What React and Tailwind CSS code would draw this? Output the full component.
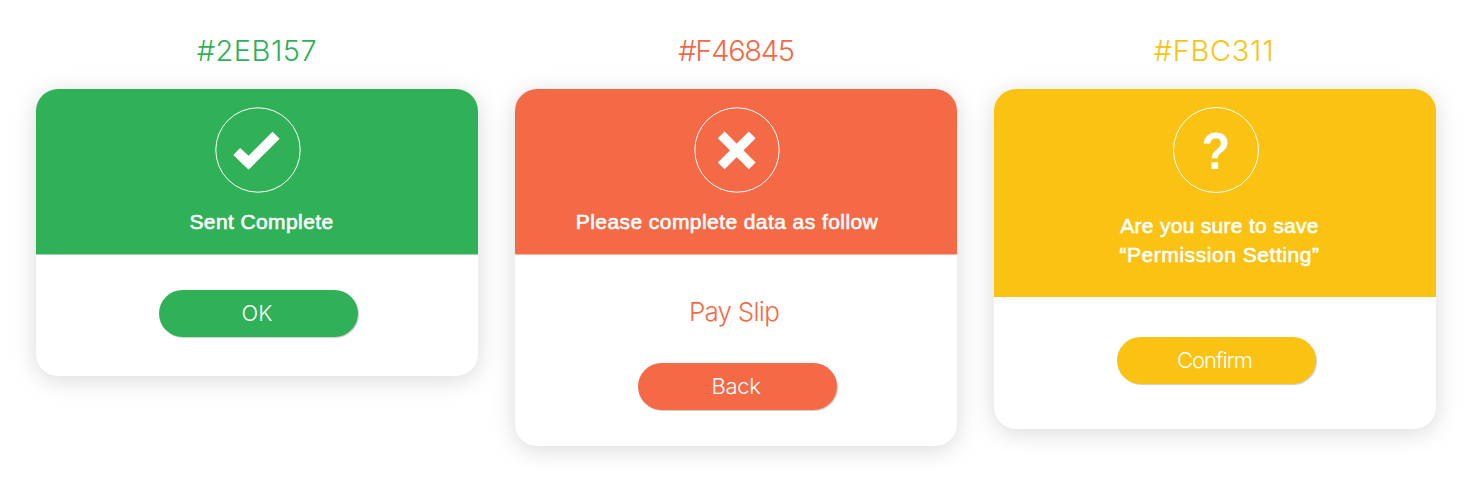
function CheckIcon() {
  return (
    <svg className="ml-[2px]" width="86" height="86" viewBox="0 0 86 86" fill="none">
      <circle cx="43" cy="43" r="42.2" stroke="white" strokeWidth="1" />
      <path d="M18.3 47.9L25.2 41.1L33.6 48.7L57.6 24.7L64.6 31.7L33.6 62.7Z" fill="white" />
    </svg>
  );
}

function CrossIcon() {
  return (
    <svg className="ml-[2px]" width="86" height="86" viewBox="0 0 86 86" fill="none">
      <circle cx="43" cy="43" r="42.2" stroke="white" strokeWidth="1" />
      <path d="M27.2 27.8L58.2 58.8M58.2 27.8L27.2 58.8" stroke="white" strokeWidth="9.6" />
    </svg>
  );
}

function QuestionIcon() {
  return (
    <div className="ml-[2px] flex h-[86px] w-[86px] items-center justify-center rounded-full border border-white">
      <span className="scale-x-90 pt-[2px] font-['Liberation_Sans',sans-serif] text-[52px] leading-none font-bold text-white">?</span>
    </div>
  );
}

function HexLabel({ className, children }) {
  return (
    <h2 className={`flex h-[89px] items-center justify-center pt-[11px] text-[29px] leading-none font-light whitespace-nowrap ${className}`}>
      {children}
    </h2>
  );
}

function Card({ children }) {
  return (
    <section className="overflow-hidden rounded-[22px] bg-white shadow-[0_4px_24px_rgba(0,0,0,0.15)]">
      {children}
    </section>
  );
}

function CardButton({ className, children }) {
  return (
    <button className={`flex h-[47px] w-[199px] items-center justify-center rounded-full pb-px text-[22px] leading-none font-light text-white shadow-[1px_1px_1px_rgba(0,0,0,0.2)] ${className}`}>
      {children}
    </button>
  );
}

const heading =
  "font-['Liberation_Sans',sans-serif] text-[21px] whitespace-nowrap text-white [-webkit-text-stroke:0.6px_white]";

export default function App() {
  return (
    <main className="flex h-[490px] w-[1473px] items-start gap-[37px] overflow-hidden bg-white pl-[36px] font-['Inter',sans-serif]">
      <div className="w-[442px] shrink-0">
        <HexLabel className="tracking-[0.5px] text-[#2EB157]">#2EB157</HexLabel>
        <Card>
          <header className="flex h-[165.5px] flex-col items-center border-b border-[#97d8ab] bg-[#30b158] bg-clip-padding pt-[18px]">
            <CheckIcon />
            <p className={`mt-[15px] ml-[9px] leading-[28px] tracking-[0.4px] ${heading}`}>Sent Complete</p>
          </header>
          <div className="flex h-[121.5px] flex-col items-center pt-[35px]">
            <CardButton className="ml-[2px] bg-[#30b158]">
              <span className="mr-[2px]">OK</span>
            </CardButton>
          </div>
        </Card>
      </div>

      <div className="w-[442px] shrink-0">
        <HexLabel className="tracking-[-1.25px] text-[#F46845]">#F46845</HexLabel>
        <Card>
          <header className="flex h-[165.5px] flex-col items-center border-b border-[#fab5a3] bg-[#f56a46] bg-clip-padding pt-[18px]">
            <CrossIcon />
            <p className={`mt-[15px] mr-[18px] leading-[28px] tracking-[0.43px] ${heading}`}>Please complete data as follow</p>
          </header>
          <div className="flex h-[191.5px] flex-col items-center pt-[40px]">
            <p className="mr-[4px] h-[34px] text-[26px] leading-[34px] font-light tracking-[-0.75px] whitespace-nowrap text-[#f56a46]">Pay Slip</p>
            <CardButton className="mt-[34px] ml-[2px] bg-[#f56a46]">
              <span className="mr-[2px] tracking-[-0.3px]">Back</span>
            </CardButton>
          </div>
        </Card>
      </div>

      <div className="w-[442px] shrink-0">
        <HexLabel className="pr-[2px] tracking-[0.7px] text-[#FBC311]">#FBC311</HexLabel>
        <Card>
          <header className="flex h-[208px] flex-col items-center bg-[#fac213] pt-[18px]">
            <QuestionIcon />
            <p className={`mt-[18px] ml-[9px] text-center leading-[29px] tracking-[0.3px] ${heading}`}>
              Are you sure to save
              <br />
              <span className="tracking-[0.55px]">“Permission Setting”</span>
            </p>
          </header>
          <div className="flex h-[132px] flex-col items-center pt-[39.5px]">
            <CardButton className="ml-[3px] bg-[#fac213]">
              <span className="mr-[4px] tracking-[-1px]">Confirm</span>
            </CardButton>
          </div>
        </Card>
      </div>
    </main>
  );
}
